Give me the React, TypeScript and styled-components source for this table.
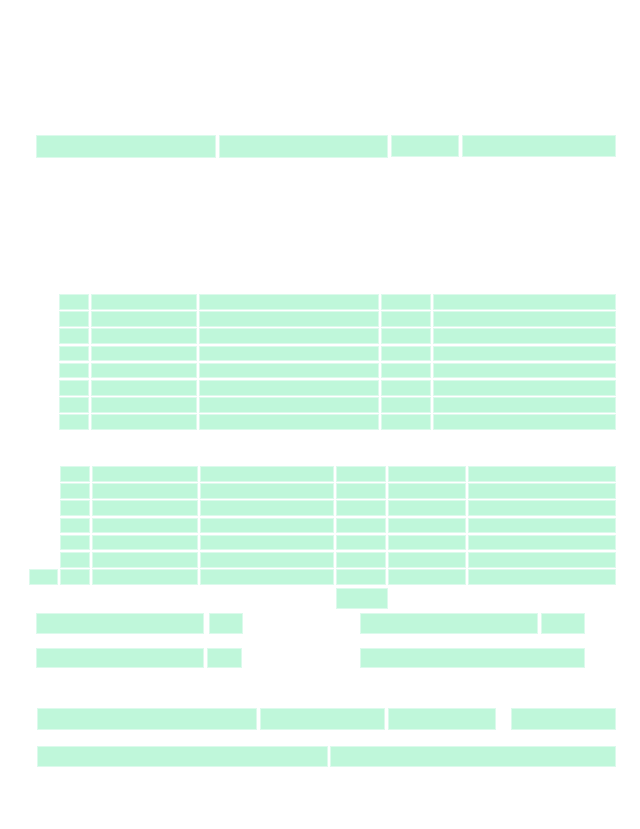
import * as React from 'react'
import styled, { createGlobalStyle } from 'styled-components'

const MINT = '#bff7da'
const MINT_EDGE = '#dcfaec'

const GlobalStyle = createGlobalStyle`
  html, body {
    margin: 0;
    padding: 0;
    background: #ffffff;
    font-family: "Liberation Sans", Arial, sans-serif;
  }
`

const Page = styled.div`
  width: 640px;
  min-height: 829px;
  box-sizing: border-box;
  background: #fff;
  display: flex;
  flex-direction: column;
`

const Block = styled.div<{ $w?: number; $h?: number }>`
  box-sizing: border-box;
  background: ${MINT};
  border: 1px solid ${MINT_EDGE};
  width: ${p => (p.$w ? `${p.$w}px` : 'auto')};
  height: ${p => (p.$h ? `${p.$h}px` : '100%')};
`

const Row = styled.div<{ $top: number; $left: number; $gap?: number }>`
  display: flex;
  align-items: flex-start;
  margin-top: ${p => p.$top}px;
  padding-left: ${p => p.$left}px;
  gap: ${p => p.$gap ?? 3}px;
`

const Spacer = styled.div<{ $w: number }>`
  width: ${p => p.$w}px;
  flex: none;
`

const Grid = styled.div<{ $top: number; $left: number; $cols: string }>`
  display: grid;
  grid-template-columns: ${p => p.$cols};
  grid-auto-rows: 15.7px;
  column-gap: 2px;
  row-gap: 1.5px;
  margin-top: ${p => p.$top}px;
  margin-left: ${p => p.$left}px;
`

const Empty = styled.div``

const FormGrid = styled.div`
  display: grid;
  grid-template-columns: 324px 1fr;
  row-gap: 14px;
  margin-top: 4px;
  padding-left: 36px;
`

const Pair = styled.div<{ $gap: number }>`
  display: flex;
  gap: ${p => p.$gap}px;
`

const table1Cols = '30px 106px 180px 50px 183px'
const table2Cols = '29px 30px 106px 134px 50px 78px 148px'

function Table1 () {
  const rows = Array.from({ length: 8 })
  return (
    <Grid $top={136} $left={59} $cols={table1Cols}>
      {rows.map((_, r) => (
        <React.Fragment key={r}>
          <Block /><Block /><Block /><Block /><Block />
        </React.Fragment>
      ))}
    </Grid>
  )
}

function Table2 () {
  const rows = Array.from({ length: 7 })
  return (
    <>
      <Grid $top={36} $left={29} $cols={table2Cols}>
        {rows.map((_, r) => (
          <React.Fragment key={r}>
            {r === 6 ? <Block /> : <Empty />}
            <Block /><Block /><Block /><Block /><Block /><Block />
          </React.Fragment>
        ))}
      </Grid>
      <Row $top={3} $left={336}>
        <Block $w={52} $h={21} />
      </Row>
    </>
  )
}

export default function App () {
  return (
    <Page>
      <GlobalStyle />
      <Row $top={135} $left={36}>
        <Block $w={180} $h={23} />
        <Block $w={169} $h={23} />
        <Block $w={68} $h={22} />
        <Block $w={154} $h={22} />
      </Row>

      <Table1 />
      <Table2 />

      <FormGrid>
        <Pair $gap={5}>
          <Block $w={168} $h={21} />
          <Block $w={34} $h={21} />
        </Pair>
        <Pair $gap={3}>
          <Block $w={178} $h={21} />
          <Block $w={44} $h={21} />
        </Pair>
        <Pair $gap={3}>
          <Block $w={168} $h={20} />
          <Block $w={35} $h={20} />
        </Pair>
        <Pair $gap={3}>
          <Block $w={225} $h={20} />
        </Pair>
      </FormGrid>

      <Row $top={40} $left={37}>
        <Block $w={220} $h={22} />
        <Block $w={125} $h={22} />
        <Block $w={108} $h={22} />
        <Spacer $w={9} />
        <Block $w={105} $h={22} />
      </Row>
      <Row $top={16} $left={37} $gap={2}>
        <Block $w={291} $h={21} />
        <Block $w={286} $h={21} />
      </Row>
    </Page>
  )
}
